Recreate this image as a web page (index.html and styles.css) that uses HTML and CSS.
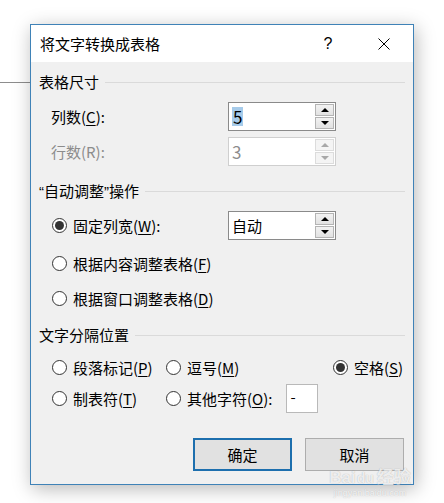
FILE: index.html
```html
<!DOCTYPE html>
<html lang="zh-CN">
<head>
  <meta charset="UTF-8">
  <title>将文字转换成表格</title>
  <link rel="stylesheet" href="styles.css">
</head>
<body>
  <div class="doc-rule"></div>
  <div class="dialog">
    <div class="titlebar">
      <span class="title">将文字转换成表格</span>
      <span class="help">?</span>
      <span class="close">
        <svg width="12" height="12" viewBox="0 0 12 12"><path d="M0.5 0.5L11.5 11.5M11.5 0.5L0.5 11.5" stroke="#000" stroke-width="1" fill="none"/></svg>
      </span>
    </div>
    <div class="content">
      <div class="group-head first"><span>表格尺寸</span></div>
      <div class="field-row">
        <span class="field-label">列数(<u>C</u>):</span>
        <div class="spin">
          <span class="spin-value"><span class="selected">5</span></span>
          <span class="spin-btns"><span class="spin-up"></span><span class="spin-down"></span></span>
        </div>
      </div>
      <div class="field-row gap-s">
        <span class="field-label disabled">行数(R):</span>
        <div class="spin disabled">
          <span class="spin-value">3</span>
          <span class="spin-btns"><span class="spin-up"></span><span class="spin-down"></span></span>
        </div>
      </div>

      <div class="group-head"><span><span class="quote">“</span>自动调整<span class="quote">”</span>操作</span></div>
      <div class="field-row">
        <span class="field-label radio-label"><span class="radio checked"></span>固定列宽(<u>W</u>):</span>
        <div class="spin">
          <span class="spin-value">自动</span>
          <span class="spin-btns"><span class="spin-up"></span><span class="spin-down"></span></span>
        </div>
      </div>
      <div class="radio-row"><span class="radio"></span>根据内容调整表格(<u>F</u>)</div>
      <div class="radio-row"><span class="radio"></span>根据窗口调整表格(<u>D</u>)</div>

      <div class="group-head"><span>文字分隔位置</span></div>
      <div class="sep-grid">
        <div class="sep-item"><span class="radio"></span>段落标记(<u>P</u>)</div>
        <div class="sep-item"><span class="radio"></span>逗号(<u>M</u>)</div>
        <div class="sep-item"><span class="radio checked"></span>空格(<u>S</u>)</div>
        <div class="sep-item tall"><span class="radio"></span>制表符(<u>T</u>)</div>
        <div class="sep-item tall"><span class="radio"></span>其他字符(<u>O</u>):<span class="char-box">-</span></div>
      </div>

      <div class="buttons">
        <button class="btn default">确定</button>
        <button class="btn">取消</button>
      </div>
    </div>
    <div class="watermark">
      <span class="wm-logo">Bai<span class="wm-paw">du</span>经验</span>
      <span class="wm-url">jingyan.baidu.com</span>
    </div>
  </div>
</body>
</html>
```

FILE: styles.css
```css
html, body {
  margin: 0;
  padding: 0;
  background: #fff;
}
body {
  width: 444px;
  height: 503px;
  position: relative;
  overflow: hidden;
  font-family: "Noto Sans CJK SC", "Liberation Sans", sans-serif;
  font-size: 15px;
  color: #000;
}
u {
  text-decoration: underline;
  text-underline-offset: 2px;
}
.quote {
  font-family: "Liberation Sans", sans-serif;
}

/* line of the document behind the dialog */
.doc-rule {
  position: absolute;
  left: 0;
  top: 82px;
  width: 30px;
  height: 1px;
  background: #8d8d8d;
}

.dialog {
  position: relative;
  margin: 24px 0 0 30px;
  width: 382px;
  height: 459px;
  border: 1px solid #3f82b7;
  background: #f0f0f0;
  box-shadow: 2px 4px 18px rgba(0,0,0,0.28);
  display: flex;
  flex-direction: column;
}

.titlebar {
  height: 37px;
  background: #fff;
  display: flex;
  align-items: center;
  padding-left: 9px;
}
.title {
  flex: 1;
  line-height: 20px;
}
.help {
  width: 14px;
  margin-right: 43px;
  font-family: "Liberation Sans", sans-serif;
  font-size: 16px;
  text-align: center;
}
.close {
  display: flex;
  margin-right: 23px;
}

.content {
  flex: 1;
  padding: 0 8px 0 8px;
  display: flex;
  flex-direction: column;
}

.group-head {
  display: flex;
  align-items: center;
  height: 20px;
  line-height: 20px;
  margin-top: 15px;
}
.group-head.first {
  margin-top: 10px;
}
.group-head::after {
  content: "";
  flex: 1;
  height: 1px;
  background: #dadada;
  margin-left: 6px;
}

.field-row {
  display: flex;
  align-items: center;
  margin-top: 10px;
  padding-left: 12px;
}
.field-row.gap-s {
  margin-top: 6px;
}
.field-label {
  width: 177px;
  display: flex;
  align-items: center;
  line-height: 20px;
}
.field-label.radio-label {
  margin-left: 1px;
  width: 176px;
}
.disabled {
  color: #8c8c8c;
}

.spin {
  width: 106px;
  height: 27px;
  border: 1px solid #8a8a8a;
  background: #fff;
  display: flex;
}
.spin.disabled {
  border-color: #cfcfcf;
}
.spin-value {
  flex: 1;
  padding-left: 3px;
  display: flex;
  align-items: center;
}
.selected {
  background: #a6cbea;
  line-height: 19px;
  padding: 0 1px;
  font-size: 17px;
}
.spin.disabled .spin-value {
  font-size: 17px;
}
.spin-btns {
  width: 19px;
  display: flex;
  flex-direction: column;
  padding: 1px 1px 1px 0;
  gap: 1px;
}
.spin-up, .spin-down {
  flex: 1;
  border: 1px solid #b4b4b4;
  background: linear-gradient(#f2f2f2, #e2e2e2);
  display: flex;
  align-items: center;
  justify-content: center;
}
.spin-up::before, .spin-down::before {
  content: "";
  border-left: 4px solid transparent;
  border-right: 4px solid transparent;
}
.spin-up::before {
  border-bottom: 4px solid #000;
}
.spin-down::before {
  border-top: 4px solid #000;
}
.spin.disabled .spin-up, .spin.disabled .spin-down {
  border-color: #dcdcdc;
  background: #f4f4f4;
}
.spin.disabled .spin-up::before {
  border-bottom-color: #a8a8a8;
}
.spin.disabled .spin-down::before {
  border-top-color: #a8a8a8;
}

.radio {
  width: 13px;
  height: 13px;
  border: 1px solid #333;
  border-radius: 50%;
  background: #fff;
  margin-right: 6px;
  flex-shrink: 0;
  display: flex;
  align-items: center;
  justify-content: center;
}
.radio.checked::before {
  content: "";
  width: 9px;
  height: 9px;
  border-radius: 50%;
  background: #333;
}

.radio-row {
  display: flex;
  align-items: center;
  height: 24px;
  margin-top: 11px;
  padding-left: 13px;
}

.sep-grid {
  display: grid;
  grid-template-columns: 114px 167px 1fr;
  grid-template-rows: 24px 29px;
  row-gap: 5px;
  margin-top: 10px;
  padding-left: 13px;
}
.sep-item {
  display: flex;
  align-items: center;
  white-space: nowrap;
}
.char-box {
  width: 32px;
  height: 29px;
  border: 1px solid #b9b9b9;
  background: #fff;
  margin-left: 14px;
  padding-left: 3px;
  box-sizing: border-box;
  line-height: 24px;
}

.buttons {
  display: flex;
  justify-content: flex-end;
  gap: 13px;
  margin-top: 25px;
  padding-right: 1px;
}
.btn {
  width: 99px;
  height: 33px;
  font-family: inherit;
  font-size: 15px;
  color: #000;
  background: #e1e1e1;
  border: 1px solid #adadad;
  padding: 0;
}
.btn.default {
  border: 2px solid #1d6fae;
}

/* site watermark stamped over the screenshot */
.watermark {
  position: absolute;
  right: -3px;
  bottom: -15px;
  width: 92px;
  display: flex;
  flex-direction: column;
  align-items: center;
  pointer-events: none;
}
.wm-logo {
  font-family: "Liberation Sans", "Noto Sans CJK SC", sans-serif;
  font-size: 17px;
  font-weight: bold;
  line-height: 17px;
  color: rgba(255,255,255,0.8);
  text-shadow: 0 0 1px rgba(0,0,0,0.3);
  white-space: nowrap;
}
.wm-paw {
  font-size: 14px;
  margin: 0 3px 0 1px;
}
.wm-url {
  font-family: "Liberation Sans", sans-serif;
  font-size: 9px;
  line-height: 12px;
  color: rgba(255,255,255,0.85);
  text-shadow: 0 0 1px rgba(0,0,0,0.25);
}
```
